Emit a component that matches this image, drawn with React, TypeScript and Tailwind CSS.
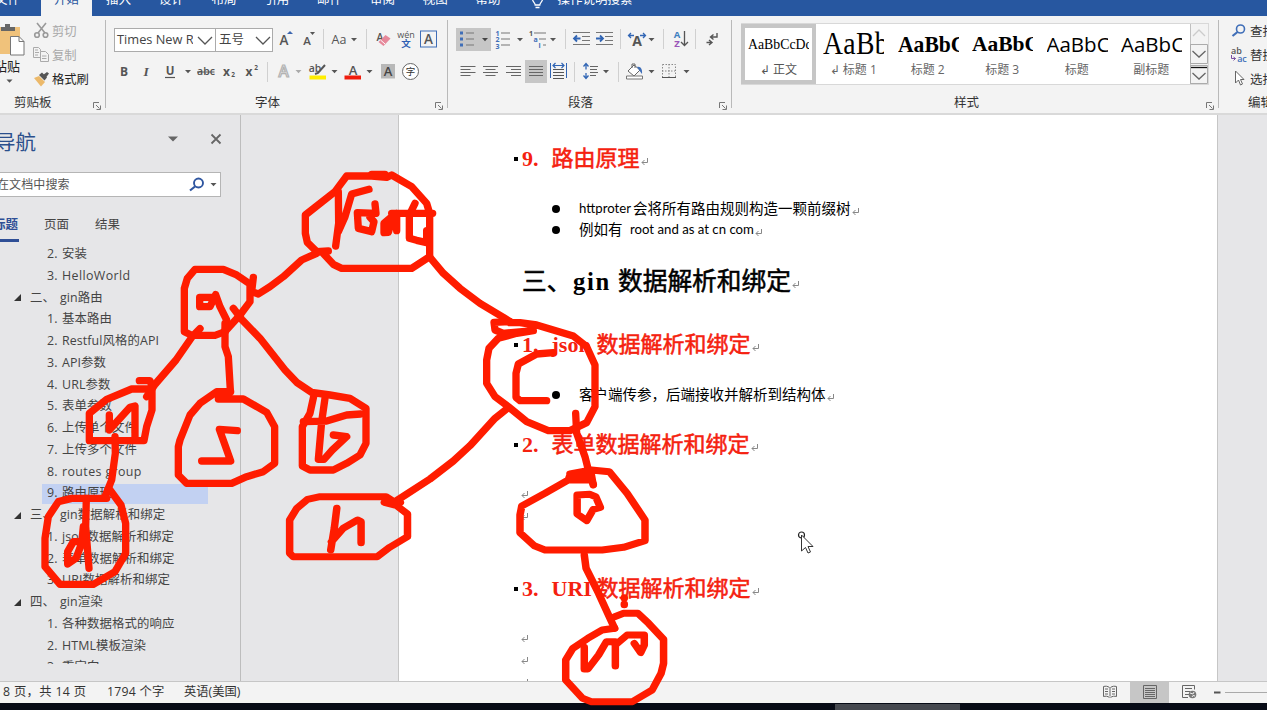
import type { ReactNode } from "react";

const UI = "font-['Open_Sans','Noto_Sans_CJK_SC',sans-serif]";

/* Icon cell: the view box uses the window's own coordinates. */
function Ico({ x, y, w, h, children }: { x: number; y: number; w: number; h: number; children?: ReactNode }) {
  return (
    <svg className="block shrink-0 overflow-visible" width={w} height={h} viewBox={`${x} ${y} ${w} ${h}`} fill="none">
      {children}
    </svg>
  );
}

function Caret({ x, y, c = "#555" }: { x: number; y: number; c?: string }) {
  return <path d={`M${x - 3} ${y - 1.5}h6l-3 3.2z`} fill={c} />;
}

function Letter({ x, y, s, c = "#555", b = 700, children, f = "Open Sans" }: { x: number; y: number; s: number; c?: string; b?: number; f?: string; children: ReactNode }) {
  return (
    <text x={x} y={y} fontSize={s} fill={c} fontWeight={b} textAnchor="middle" fontFamily={`${f}, 'Noto Sans CJK SC', sans-serif`}>
      {children}
    </text>
  );
}

function Launcher() {
  return (
    <svg className="block shrink-0" width="8" height="8" viewBox="0 0 8 8" fill="none" stroke="#777">
      <path d="M.5 6V.5H6M3 3l3.5 3.5M7.5 3.5v4h-4" />
    </svg>
  );
}

const Sep = () => <div className="h-[88px] w-px shrink-0 bg-[#b9b9b9]" />;

function MenuBar() {
  const tabs = ["插入", "设计", "布局", "引用", "邮件", "审阅", "视图", "帮助"];
  return (
    <div className="flex h-4 overflow-hidden bg-[#2757a0] text-[12.5px] leading-5 text-white">
      <div className="w-[41px] shrink-0"><div className="-mt-[10px] -ml-[5px]">文件</div></div>
      <div className="w-[51px] shrink-0 bg-[#f3f3f3] text-center text-[#2757a0]"><div className="-mt-[10px]">开始</div></div>
      {tabs.map((t) => (
        <div key={t} className="w-[52.8px] shrink-0 text-center"><div className="-mt-[10px]">{t}</div></div>
      ))}
      <Ico x={514} y={0} w={43} h={16}>
        <path d="M532.5 -1c0 3 2.7 3.500 2.700 6h4.600c0-2.500 2.700-3 2.700-6M535.500 7.500h4" stroke="#fff" strokeWidth="1.3" />
      </Ico>
      <div className="-mt-[10px] shrink-0">操作说明搜索</div>
    </div>
  );
}

function Clipboard() {
  return (
    <div className="flex w-[105px] shrink-0 flex-col">
      <div className="flex h-[72px]">
        <div className="w-[33px] shrink-0">
          <Ico x={0} y={20} w={33} h={37}>
            <path d="M-4 27h24v27H-4z" fill="#f0c27b" />
            <path d="M1 27h14v4H1zM5 24h5v4H5z" fill="#666" />
            <path d="M10.500 36.500h8.500l5 5v13.500H10.500z" fill="#fff" stroke="#777" />
            <path d="M19 36.500v5h5" stroke="#777" />
          </Ico>
          <div className="-ml-[6px] h-[18px] text-[13px] leading-[18px] whitespace-nowrap text-[#222]">粘贴</div>
          <Ico x={0} y={75} w={33} h={10}><Caret x={9.5} y={81} /></Ico>
        </div>
        <div className="shrink-0 text-[12.3px] text-[#a8a8a8]">
          <div className="flex h-6 items-center">
            <Ico x={33} y={20} w={19} h={24}>
              <g stroke="#9a9a9a" strokeWidth="1.6"><path d="M37 23l8 10M46 23l-8 10" /><circle cx="37" cy="35" r="2.3" /><circle cx="45.5" cy="35" r="2.3" /></g>
            </Ico>
            剪切
          </div>
          <div className="flex h-6 items-center">
            <Ico x={33} y={44} w={19} h={24}>
              <g stroke="#aaa"><path d="M40 57.500h-6.500v-10h5l2 2v2M35 50h3M35 52.500h4M35 55h3" /><path d="M40.500 51.500h5l3 3v7h-8zM42 56h4.500M42 58.500h4.500" /></g>
            </Ico>
            复制
          </div>
          <div className="flex h-6 items-center text-[#222]">
            <Ico x={33} y={68} w={19} h={24}>
              <path d="M34 78l5-2 6 6-4 4.500z" fill="#ecb96a" /><path d="M39 75l3-2.500 5 5-2.500 3z" fill="#555" /><path d="M43 75l4-3 2 1.500-3 4z" fill="#555" />
            </Ico>
            格式刷
          </div>
        </div>
      </div>
      <div className="flex h-[22px] items-center pl-[14px] text-[12.5px] text-[#333]">剪贴板<div className="mt-[5px] ml-[41px]"><Launcher /></div></div>
    </div>
  );
}

function FontGroup() {
  return (
    <div className="flex w-[341px] shrink-0 flex-col pl-[8px]">
      <div className="mt-2 flex h-6">
        <div className="flex h-6 w-[102px] shrink-0 items-center border border-[#ababab] bg-white text-[12.8px] text-[#444]">
          <div className="w-[78px] shrink-0 overflow-hidden pl-[2px] whitespace-nowrap">Times New R</div>
          <Ico x={193} y={29} w={22} h={22}><path d="M198 37l7 7 7-7" stroke="#555" strokeWidth="1.3" /></Ico>
        </div>
        <div className="-ml-px flex h-6 w-[58px] shrink-0 items-center border border-[#ababab] bg-white pl-[3px] text-[12.5px] text-[#444]">
          <div className="w-[32px] shrink-0">五号</div>
          <Ico x={250} y={29} w={20} h={22}><path d="M255 37l7 7 7-7" stroke="#555" strokeWidth="1.3" /></Ico>
        </div>
        <Ico x={273} y={28} w={50} h={24}>
          <Letter x={284} y={45} s={13.5} b={600}>A</Letter><path d="M287 34l3-3 3 3z" fill="#3d67b0" />
          <Letter x={307} y={45} s={11.5} b={600}>A</Letter><path d="M310 32h5l-2.500 3z" fill="#555" />
        </Ico>
        <div className="mt-px h-5 w-px bg-[#d0d0d0]" />
        <Ico x={324} y={28} w={42} h={24}><Letter x={339} y={43.5} s={12.5} b={400}>Aa</Letter><Caret x={354} y={39.5} /></Ico>
        <div className="mt-px h-5 w-px bg-[#d0d0d0]" />
        <Ico x={367} y={28} w={79} h={24}>
          <Letter x={380} y={41} s={10.5} b={600}>A</Letter>
          <path d="M378.500 42l7-7 5 3.500-7 7.500z" fill="#e6889a" /><path d="M380.500 40l4.500 4" stroke="#fff" />
          <Letter x={406} y={38} s={9} b={400}>wén</Letter><Letter x={406} y={47} s={9.5} c="#2f5fb3">文</Letter>
          <rect x="420.5" y="31" width="16" height="16" stroke="#3f6eb8" /><Letter x={428.5} y={44} s={13.5} b={600}>A</Letter>
        </Ico>
      </div>
      <div className="mt-2 flex h-6">
        <Ico x={114} y={60} w={153} h={24}>
          <Letter x={124} y={75.5} s={12}>B</Letter>
          <text x="143.5" y="75.5" fontSize="13.5" fontStyle="italic" fontWeight="700" fill="#555" fontFamily="Liberation Serif">I</text>
          <Letter x={170} y={75} s={11.5}>U</Letter><path d="M165 77.500h10" stroke="#555" strokeWidth="1.2" /><Caret x={188} y={71.5} />
          <Letter x={206} y={75} s={10.5} b={600}>abc</Letter><path d="M197 72h17.500" stroke="#555" />
          <Letter x={226.5} y={75.5} s={12}>x</Letter><Letter x={233} y={77} s={6.5}>2</Letter>
          <Letter x={249} y={75.5} s={12}>x</Letter><Letter x={256} y={69.5} s={6.5}>2</Letter>
        </Ico>
        <div className="mt-0.5 h-5 w-px bg-[#d0d0d0]" />
        <Ico x={268} y={60} w={178} h={24}>
          <text x="283.5" y="77" fontSize="15.5" fontWeight="600" textAnchor="middle" fill="#f3f3f3" stroke="#b2b2b2" strokeWidth="1.2" fontFamily="Open Sans">A</text>
          <Caret x={298.5} y={71.5} c="#aaa" />
          <Letter x={315} y={71.5} s={10.5} b={600}>ab</Letter><path d="M325 65l-7 8-3 1" stroke="#555" strokeWidth="2" /><path d="M309.500 75.500h16.500v4h-16.500z" fill="#ffee00" /><Caret x={334.5} y={71.5} />
          <Letter x={353} y={74.5} s={13} b={600}>A</Letter><path d="M344.500 75.500h16.500v4h-16.500z" fill="#f01c0c" /><Caret x={369.5} y={71.5} />
          <path d="M381 64h14v14.500h-14z" fill="#b8b8b8" /><Letter x={388} y={76} s={13} b={600} c="#444">A</Letter>
          <circle cx="410.5" cy="71.5" r="8" stroke="#666" fill="#fff" /><Letter x={410.5} y={75} s={9.5} b={400} c="#333">字</Letter>
        </Ico>
      </div>
      <div className="mt-2 flex h-[22px] items-center pl-[141px] text-[12.5px] text-[#333]">字体<div className="mt-[5px] ml-[155px]"><Launcher /></div></div>
    </div>
  );
}

function ParagraphGroup() {
  return (
    <div className="flex w-[283px] shrink-0 flex-col pl-[8px]">
      <div className="mt-2 flex h-6">
        <div className="h-[23px] w-[35px] shrink-0 bg-[#c6c6c6]">
          <Ico x={456} y={28} w={35} h={23}>
            <path d="M460 31.500h3v3h-3zM460 37.500h3v3h-3zM460 43.500h3v3h-3z" fill="#3f6eb8" /><path d="M466 33h8M466 39h8M466 45h8" stroke="#777" strokeWidth="1.2" /><Caret x={485} y={39.5} c="#444" />
          </Ico>
        </div>
        <Ico x={491} y={28} w={74} h={24}>
          <Letter x={497.5} y={35.5} s={7} c="#3f6eb8">1</Letter><Letter x={497.5} y={42} s={7} c="#3f6eb8">2</Letter><Letter x={497.5} y={48.5} s={7} c="#3f6eb8">3</Letter>
          <path d="M501 33h9M501 39h9M501 45h9" stroke="#777" strokeWidth="1.2" /><Caret x={520} y={39.5} />
          <Letter x={531} y={35.5} s={7}>1</Letter><Letter x={535.5} y={41.5} s={7} c="#3f6eb8">a</Letter><Letter x={539.5} y={48} s={7} c="#3f6eb8">i</Letter>
          <path d="M534 33h12M539 39h7M543 45h3" stroke="#777" strokeWidth="1.2" /><Caret x={553} y={39.5} />
        </Ico>
        <div className="mt-px h-5 w-px bg-[#d0d0d0]" />
        <Ico x={566} y={28} w={54} h={24}>
          <path d="M573 32.500h17M582 36.500h8M582 40.500h8M573 44.500h17M596 32.500h17M605 36.500h8M605 40.500h8M596 44.500h17" stroke="#777" strokeWidth="1.2" />
          <path d="M580.500 38.500h-6M577 35.500l-3 3 3 3M596 38.500h6.500M600 35.500l3 3-3 3" stroke="#3165b4" strokeWidth="1.8" />
        </Ico>
        <div className="mt-px h-5 w-px bg-[#d0d0d0]" />
        <Ico x={621} y={28} w={42} h={24}>
          <Letter x={637} y={45.5} s={14}>A</Letter><path d="M629 35.500h5M631 33l-2.500 2.500 2.500 2.500M640 35.500h5M643 33l2.500 2.500-2.500 2.500" stroke="#3165b4" strokeWidth="1.3" /><Caret x={651.5} y={39.5} />
        </Ico>
        <div className="mt-px h-5 w-px bg-[#d0d0d0]" />
        <Ico x={664} y={28} w={31} h={24}>
          <Letter x={677} y={38} s={9.5} c="#3f7fc0">A</Letter><Letter x={677} y={46.5} s={9.5} c="#9a55b8">Z</Letter><path d="M684.500 31v14M681 42l3.500 3.500L688 42" stroke="#555" strokeWidth="1.3" />
        </Ico>
        <div className="mt-px h-5 w-px bg-[#d0d0d0]" />
        <Ico x={696} y={28} w={34} h={24}>
          <path d="M717 33v4h-6M713.500 34.500l-3 2.500 3 2.500M706.500 42.500h5M709 40l3 2.500-3 2.500" stroke="#555" strokeWidth="1.4" />
        </Ico>
      </div>
      <div className="mt-2 flex h-6">
        <Ico x={456} y={60} w={69} h={24}>
          <path d="M460.500 66.500h15M460.500 69.500h10M460.500 72.500h15M460.500 75.500h10M483 66.500h15M485.500 69.500h10M483 72.500h15M485.500 75.500h10M506 66.500h15M511 69.500h10M506 72.500h15M511 75.500h10" stroke="#666" />
        </Ico>
        <div className="h-[23px] w-[22px] shrink-0 bg-[#c6c6c6]">
          <Ico x={525} y={60} w={22} h={23}><path d="M529 66.500h14M529 69.500h14M529 72.500h14M529 75.500h14" stroke="#666" /></Ico>
        </div>
        <Ico x={547} y={60} w={27} h={24}>
          <path d="M550.500 63v15M566.500 63v15" stroke="#3165b4" /><path d="M553 65.500h11M555.500 63l-2.500 2.500 2.500 2.500M561.500 63l2.500 2.500-2.500 2.500" stroke="#3165b4" strokeWidth="1.2" /><path d="M553 69.500h11M553 72.500h11M553 75.500h11M553 78.500h11" stroke="#555" />
        </Ico>
        <div className="mt-0.5 h-5 w-px bg-[#d0d0d0]" />
        <Ico x={575} y={60} w={43} h={24}>
          <path d="M586 64v5.500M586 73v5.500M583.500 66.500l2.500-3 2.500 3M583.500 75.500l2.500 3 2.500-3" stroke="#3165b4" strokeWidth="1.3" /><path d="M590 66.500h8M590 69.500h7M590 72.500h8M590 75.500h6" stroke="#666" /><Caret x={606} y={71.5} />
        </Ico>
        <div className="mt-0.5 h-5 w-px bg-[#d0d0d0]" />
        <Ico x={619} y={60} w={112} h={24}>
          <path d="M628 71l6-6 6 5-6 6z" fill="#fff" stroke="#666" /><path d="M632 68v-4h3v4" stroke="#666" /><path d="M637 67c4-1 5.500 3 5 7l-3-4z" fill="#3f6eb8" /><path d="M626.500 76h16v3h-16z" fill="#fff" stroke="#777" /><Caret x={651.5} y={71.5} />
          <path d="M662.500 64.500h13v13h-13zM669 64v13M662 71h13" stroke="#888" strokeDasharray="1.5 1.5" /><path d="M662 77.500h14" stroke="#555" /><Caret x={686.5} y={71.5} />
        </Ico>
      </div>
      <div className="mt-2 flex h-[22px] items-center pl-[112px] text-[12.5px] text-[#333]">段落<div className="mt-[5px] ml-[126px]"><Launcher /></div></div>
    </div>
  );
}

function StylesGroup() {
  const cells: [string, string, string][] = [
    ["AaBb", "↲ 标题 1", "scale-x-[.88] text-[31.5px] tracking-[.4px] font-['Liberation_Serif']"],
    ["AaBbC", "标题 2", "scale-x-[.9] text-[24px] font-bold font-['Liberation_Serif']"],
    ["AaBbC", "标题 3", "text-[21.5px] font-bold font-['Liberation_Serif']"],
    ["AaBbC", "标题", "text-[20.5px] font-['Open_Sans']"],
    ["AaBbC", "副标题", "text-[20.5px] font-['Open_Sans']"],
  ];
  return (
    <div className="flex w-[486px] shrink-0 flex-col pl-[9px]">
      <div className="mt-[3px] flex h-[62px] w-[468px] border border-[#d8d8d8] bg-white">
        <div className="-ml-px h-[60px] w-[75px] shrink-0 border-4 border-[#c6c6c6] text-center text-[12px] text-[#555]">
          <div className="ml-[3px] h-[34px] w-[61px] overflow-hidden text-left font-['Liberation_Serif'] text-[13.8px] leading-[34px] whitespace-nowrap text-black">AaBbCcDd</div>
          <div className="leading-[15px]">↲ 正文</div>
        </div>
        {cells.map(([s, l, c], i) => (
          <div key={i} className="h-[59px] w-[74.5px] shrink-0 text-center text-[12px] text-[#666]">
            <div className="ml-[7px] h-[38px] w-[61px] overflow-hidden text-left text-black"><div className={`origin-left leading-[40px] whitespace-nowrap ${c}`}>{s}</div></div>
            <div className="leading-[15px]">{l}</div>
          </div>
        ))}
        <div className="ml-auto w-[18px] shrink-0 bg-[#f3f3f3]">
          <Ico x={1190} y={24} w={18} h={60}>
            <path d="M1190.500 24v60" stroke="#c0c0c0" /><path d="M1190.500 44.500h17v19h-17zM1190.500 65.500h17v18h-17z" stroke="#ababab" />
            <path d="M1193 36l6-6 6 6" stroke="#ccc" strokeWidth="1.3" /><path d="M1192.500 51l6.500 6 6.500-6M1192.500 73l6.500 6 6.500-6" stroke="#666" strokeWidth="1.3" /><path d="M1191 67.500h16" stroke="#111" strokeWidth="1.3" />
          </Ico>
        </div>
      </div>
      <div className="mt-[7px] flex h-[22px] items-center pl-[213px] text-[12.5px] text-[#333]">样式<div className="mt-[5px] ml-[227px]"><Launcher /></div></div>
    </div>
  );
}

function EditGroup() {
  return (
    <div className="w-12 shrink-0 overflow-hidden text-[12.5px] whitespace-nowrap text-[#333]">
      <div className="flex h-6 items-center">
        <Ico x={1219} y={20} w={31} h={24}><circle cx="1240.5" cy="29" r="4" stroke="#3f6eb8" strokeWidth="1.6" /><path d="M1237.500 32l-5 4" stroke="#3f6eb8" strokeWidth="2.2" /></Ico>查找
      </div>
      <div className="flex h-6 items-center">
        <Ico x={1219} y={44} w={31} h={24}><Letter x={1236.5} y={54} s={9} b={600}>ab</Letter><Letter x={1242} y={61.5} s={9} b={600} c="#3f6eb8">ac</Letter><path d="M1231.500 55v3.500h4M1233.500 57l2 1.500-2 2" stroke="#7a4ea0" /></Ico>替换
      </div>
      <div className="flex h-6 items-center">
        <Ico x={1219} y={68} w={31} h={24}><path d="M1235.500 71v12l3-3 2 5 2-1-2-4.500h3.500z" fill="#fff" stroke="#666" /></Ico>选择
      </div>
      <div className="ml-[29px] h-[22px] leading-[22px]">编辑</div>
    </div>
  );
}

const outline: [number, string, string][] = [
  [1, "2.", "安装"], [1, "3.", "HelloWorld"], [0, "二、", "gin路由"], [1, "1.", "基本路由"], [1, "2.", "Restful风格的API"],
  [1, "3.", "API参数"], [1, "4.", "URL参数"], [1, "5.", "表单参数"], [1, "6.", "上传单个文件"], [1, "7.", "上传多个文件"],
  [1, "8.", "routes group"], [1, "9.", "路由原理"], [0, "三、", "gin数据解析和绑定"], [1, "1.", "json数据解析和绑定"],
  [1, "2.", "表单数据解析和绑定"], [1, "3.", "URI数据解析和绑定"], [0, "四、", "gin渲染"], [1, "1.", "各种数据格式的响应"],
  [1, "2.", "HTML模板渲染"], [1, "3.", "重定向"],
];

function NavPane() {
  return (
    <div className="flex w-[241px] shrink-0 flex-col overflow-hidden border-r border-[#bdbdbd] text-[12.4px] tracking-[.1px] text-[#444]">
      <div className="flex h-[57px]">
        <div className="-ml-[5px] w-[165px] pt-[12px] text-[20.5px] leading-[30px] text-[#2b4f8c]">导航</div>
        <Ico x={160} y={115} w={70} h={40}><path d="M168 136.500h10l-5 5z" fill="#666" /><path d="M211.500 134.500l9 9M220.500 134.500l-9 9" stroke="#666" strokeWidth="1.8" /></Ico>
      </div>
      <div className="-ml-1 flex h-[25px] w-[225px] shrink-0 items-center border border-[#b5b5b5] bg-white text-[12px] text-[#555]">
        <div className="w-[185px]">在文档中搜索</div>
        <Ico x={182} y={173} w={38} h={23}><circle cx="198.5" cy="183" r="4.5" stroke="#2f56a0" strokeWidth="1.9" /><path d="M195 186.500l-5 4" stroke="#2f56a0" strokeWidth="2.2" /><Caret x={213.5} y={184.5} /></Ico>
      </div>
      <div className="mt-[17px] flex h-7 pt-px text-[12.5px] leading-5">
        <div className="-ml-[7px] w-[26px] shrink-0 border-b-[3px] border-[#2f4f96] font-bold text-[#2f4f96]">标题</div>
        <div className="ml-[25px] w-[51px]">页面</div>
        <div>结果</div>
      </div>
      <div className="mt-px h-[421px] shrink-0 overflow-hidden pt-[.5px]">
        {outline.map(([lvl, n, t], i) =>
          lvl ? (
            <div key={i} className="flex h-[21.75px] items-center">
              <div className={`ml-[42px] flex h-5 w-[166px] items-center whitespace-nowrap ${i === 11 ? "bg-[#c2d1f2]" : ""}`}>
                <span className="ml-[5px] w-[15px] shrink-0">{n}</span>
                <span className={i === 1 || i === 10 ? "tracking-[.4px]" : ""}>{t}</span>
              </div>
            </div>
          ) : (
            <div key={i} className="flex h-[21.75px] items-center whitespace-nowrap">
              <svg className="ml-[14px] shrink-0" width="7" height="7" viewBox="0 0 7 7"><path d="M7 0v7H0z" fill="#333" /></svg>
              <span className="ml-[9px] w-[30px] shrink-0">{n}</span>{t}
            </div>
          ),
        )}
      </div>
    </div>
  );
}

const Ret = () => (
  <svg className="mt-[6px] ml-[1px] shrink-0" width="8" height="8" viewBox="0 0 8 8" fill="none" stroke="#888"><path d="M6.500 0v4.500H1M3.500 2L1 4.500 3.500 7" /></svg>
);

function Heading({ n, en, zh, c }: { n: string; en?: string; zh: string; c: string }) {
  return (
    <div className={`flex h-[30px] shrink-0 items-center pl-[115px] font-['Liberation_Serif','Noto_Sans_CJK_SC',serif] text-[22px] leading-[30px] font-bold whitespace-nowrap text-[#f5210f] ${c}`}>
      <span className="mr-1 size-1 shrink-0 bg-black" />
      <span className="w-[29.5px] shrink-0">{n}</span>
      {en && <span className="w-[45px] shrink-0">{en}</span>}
      <span className="font-normal [-webkit-text-stroke:.55px_currentColor]">{zh}</span>
      <Ret />
    </div>
  );
}

function Bullet({ children, c }: { children: ReactNode; c: string }) {
  return (
    <div className={`flex shrink-0 items-center pl-[153px] font-['Lato','Noto_Sans_CJK_SC',sans-serif] text-[14.5px] whitespace-nowrap text-black ${c}`}>
      <span className="mr-[19px] size-2 shrink-0 rounded-full bg-black" />
      {children}
      <Ret />
    </div>
  );
}

const Blank = ({ c }: { c: string }) => <div className={`flex shrink-0 pl-[121px] ${c}`}><Ret /></div>;

function Page() {
  return (
    <div className="flex w-[820px] shrink-0 flex-col overflow-hidden border-x border-[#c6c6c6] bg-white">
      <Heading n="9." zh="路由原理" c="mt-[29px]" />
      <Bullet c="mt-[24px] h-[21px]"><span className="w-[54px] text-[13.2px]">httproter</span>会将所有路由规则构造一颗前缀树</Bullet>
      <Bullet c="h-[21px]"><span className="w-[51px]">例如有</span><span className="text-[13.2px]">root and as at cn com</span></Bullet>
      <div className="mt-[22px] flex h-10 shrink-0 items-center pl-[123px] font-['Liberation_Serif','Noto_Sans_CJK_SC',serif] text-[24.7px] whitespace-nowrap text-black [-webkit-text-stroke:.55px_currentColor]">
        <span className="w-[51px]">三、</span><span className="w-[45px] font-bold tracking-[1.6px] [-webkit-text-stroke:0]">gin</span>数据解析和绑定<Ret />
      </div>
      <Heading n="1." en="json" zh="数据解析和绑定" c="mt-[28px]" />
      <Bullet c="mt-[24px] h-[22px]">客户端传参，后端接收并解析到结构体</Bullet>
      <Heading n="2." zh="表单数据解析和绑定" c="mt-[24px]" />
      <Blank c="mt-[25px] h-[22px]" />
      <Blank c="h-[22px]" />
      <Heading n="3." en="URI" zh="数据解析和绑定" c="mt-[45px]" />
      <Blank c="mt-[25px] h-[22px]" />
      <Blank c="h-[22px]" />
      <Blank c="h-[22px]" />
    </div>
  );
}

function StatusBar() {
  return (
    <div className="flex h-[22px] shrink-0 items-center border-t border-[#c6c6c6] bg-[#f3f3f3] text-[12.3px] whitespace-nowrap text-[#333]">
      <div className="w-[104px] pl-[3px] tracking-[.35px]">8 页，共 14 页</div>
      <div className="w-[80px] pl-[3px] tracking-[.25px]">1794 个字</div>
      <div className="w-[907px]">英语(美国)</div>
      <Ico x={1091} y={682} w={39} h={21}>
        <path d="M1110 687.500v9M1109.500 687.500c-2-1.500-4-1.500-6-1v10c2-.5 4-.5 6 1M1110.500 687.500c2-1.500 4-1.500 6-1v10c-2-.5-4-.5-6 1M1105 689h3M1105 691.500h3M1105 694h3M1112 689h3M1112 691.500h3M1112 694h3" stroke="#666" />
      </Ico>
      <div className="w-[39px] shrink-0 bg-[#c6c6c6]">
        <Ico x={1130} y={682} w={39} h={21}><path d="M1143.500 685.500h13v13h-13zM1145 688.500h10M1145 690.500h10M1145 692.500h10M1145 694.500h10M1145 696.500h10" stroke="#666" /></Ico>
      </div>
      <Ico x={1169} y={682} w={98} h={21}>
        <path d="M1188 697.500h-5.500v-12h12v4M1185 688.500h7M1185 691.500h5M1185 694.500h4" stroke="#666" /><circle cx="1192.5" cy="694.5" r="3.8" fill="#777" /><path d="M1190 693l3 1 1-2M1192 697l1-1.500 2 .5" stroke="#eee" />
        <path d="M1214 692.500h6.500" stroke="#555" strokeWidth="2" /><path d="M1225 692.500h42" stroke="#aaa" />
      </Ico>
    </div>
  );
}

/* Freehand pen strokes, recorded in four patches, each with its own units. */
function Ink() {
  return (
    <svg className="pointer-events-none absolute top-0 left-0" width="1267" height="710" viewBox="0 0 1267 710" fill="none" stroke="#ff1c00" strokeWidth="22" strokeLinecap="round" strokeLinejoin="round">
      <g transform="translate(170 160) scale(.33333)">
        <path d="M475 273L440 275L412 247L406 220V165L495 95L530 48H605L650 52L665 45L725 80L770 130L779 160V290L725 325H515L490 313L455 275" />
        <path d="M605 43H645" />
        <path d="M505 95L506 190L497 258M505 215L525 170L545 102L597 88" />
        <path d="M615 132L618 160L562 158L565 205L605 215L612 185L600 172" />
        <path d="M665 170L642 190V218L655 217L665 185L680 160V212M665 160H788" />
        <path d="M735 130L718 165V235L740 241L770 248V212" />
        <path d="M440 280L395 300L340 350L300 380L265 402L245 395L250 352" />
        <path d="M240 372L200 345L160 328H75L52 355L43 385V515L65 526H135L165 515L210 465L240 425Z" />
        <path d="M130 412L89 412V440H120L137 404L150 440L170 480L165 515" />
        <path d="M190 445L215 478L270 535L345 630L380 667L425 697L480 705L540 715L588 745V850L570 885L530 910L490 930H420L397 918V800L420 760L432 705" />
        <path d="M400 785L470 783L530 765L572 762M465 715L455 785L445 898H462L487 870L530 830L490 825" />
        <path d="M165 490V560L175 590L181 690" />
        <path d="M778 290L820 340L870 385L930 430L1000 472L1020 485" />
      </g>
      <g transform="translate(0 320) scale(.33333)">
        <path d="M600 26L578 48L528 120L466 192L440 230" />
        <path d="M418 182H450L456 200V270L440 320L432 362H268V280L320 238L395 207H455" />
        <path d="M328 285V330L390 262L405 258V358" />
        <path d="M345 350L346 400L335 480L315 530" />
        <path d="M330 510L363 555L377 610V700L345 755L280 793H180L135 740V655L145 590L175 545L215 535H320" />
        <path d="M259 535L257 620L267 745M240 665L220 665L203 695V732L228 715L245 670L250 620" />
        <path d="M692 215H650L600 250L570 285L540 360L535 380V465L560 490H695L740 470L790 455L824 430V320L800 277L730 237H655" />
        <path d="M712 332L658 328L675 375L692 423H605" />
      </g>
      <g transform="translate(470 290) scale(.33333)">
        <path d="M120 95L72 97L75 120L100 130L190 122M190 122L140 130L85 145L57 175L50 210V280L75 320L115 350L170 395L235 422H300L350 398L375 350V225L350 170L310 138L200 105L150 98H120" />
        <path d="M250 188L200 192L145 222L138 250V322L150 332H230" />
        <path d="M110 357L75 385L0 467L-50 513L-120 567L-220 632" />
        <path d="M317 370L320 430L345 500L360 560L370 583" />
      </g>
      <g transform="translate(270 470) scale(.35714 .33333)" strokeWidth="21">
        <path d="M365 97L350 105L320 97M350 103L385 132V200L335 232L300 260H65L55 250V150L75 115L105 88L140 80H325L350 97" />
        <path d="M187 115L180 175L170 240M172 215L205 175L245 150L255 155V218" />
        <path d="M905 45L900 15H840L835 30H895M835 30L770 70L705 108L700 135V188L740 227L770 240H930L990 232L1050 212V150L1000 70L950 5L900 0L840 12" />
        <path d="M860 75V132L887 152L905 118L925 112L912 80L895 73Z" />
        <path d="M880 255L885 295L920 370L965 475" />
        <path d="M965 440L990 430H1030L1060 460L1102 508V580L1095 610L1070 660L1015 695H900L875 685L828 630V570L848 535L890 505L930 480L965 475" />
        <path d="M880 532V597H890L920 555L942 515H967V588M967 525L1000 495H1048V525L1038 548L1020 520" />
        <path d="M992 383V385M992 402V404" />
      </g>
    </svg>
  );
}

export default function App() {
  return (
    <div className={`relative flex h-[710px] w-[1267px] flex-col overflow-hidden bg-[#e6e6e8] ${UI}`}>
      <MenuBar />
      <div className="flex h-[99px] shrink-0 items-start overflow-hidden border-b-2 border-[#d9d9d9] bg-[#f3f3f3] pt-1">
        <Clipboard />
        <Sep />
        <FontGroup />
        <Sep />
        <ParagraphGroup />
        <Sep />
        <StylesGroup />
        <Sep />
        <EditGroup />
      </div>
      <div className="flex h-[566px] shrink-0">
        <NavPane />
        <div className="w-[157px] shrink-0" />
        <Page />
      </div>
      <StatusBar />
      <div className="h-[7px] bg-[#070b16] pt-px pl-[835px]"><div className="h-1.5 w-[125px] bg-[#45484f]" /></div>
      <Ink />
      <svg className="absolute top-[530px] left-[796px]" width="18" height="26" viewBox="0 0 18 26" fill="none">
        <circle cx="5.5" cy="5" r="3" stroke="#222" strokeWidth="1.2" />
        <path d="M5.500 5v16l4-3.500 2.500 5.500 2.500-1-2.500-5.500h5z" fill="#fff" stroke="#333" />
      </svg>
    </div>
  );
}
